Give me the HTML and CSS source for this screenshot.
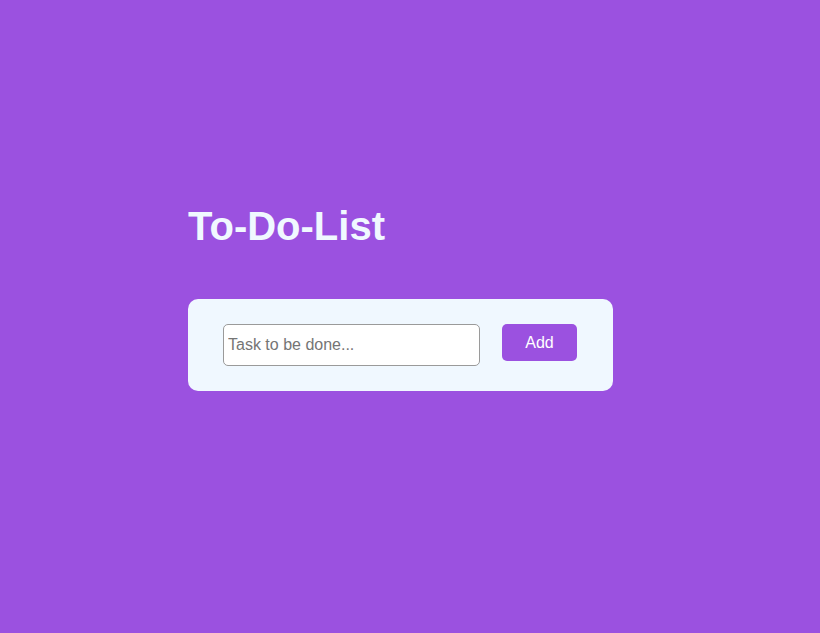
FILE: index.html
```html
<!DOCTYPE html>
<html lang="en">
<head>
<meta charset="utf-8">
<title>To-Do-List</title>
<link rel="stylesheet" href="styles.css">
</head>
<body>
<div class="page">
  <h1 class="title">To-Do-List</h1>
  <div class="card">
    <input class="task-input" type="text" placeholder="Task to be done...">
    <button class="add-btn" type="button">Add</button>
  </div>
</div>
</body>
</html>
```

FILE: styles.css
```css
html, body {
  margin: 0;
  padding: 0;
}
body {
  background: #9b51e0;
  font-family: "Liberation Sans", Arial, sans-serif;
  min-height: 100vh;
}
.page {
  padding: 203px 0 0 188px;
}
.title {
  margin: 0 0 50px 0;
  font-size: 40px;
  font-weight: bold;
  color: #f0f8ff;
  line-height: 46px;
}
.card {
  box-sizing: border-box;
  width: 425px;
  height: 92px;
  background: #f0f8ff;
  border-radius: 10px;
  padding: 25px 36px 25px 35px;
  display: flex;
  align-items: flex-start;
  gap: 22px;
}
.task-input {
  box-sizing: border-box;
  width: 257px;
  height: 42px;
  border: 1px solid #9a9a9a;
  border-radius: 5px;
  background: #fff;
  padding: 0 4px;
  font-family: "Liberation Sans", Arial, sans-serif;
  font-size: 16px;
  color: #333;
  outline: none;
}
.task-input::placeholder {
  color: #757575;
}
.add-btn {
  box-sizing: border-box;
  width: 75px;
  height: 37px;
  border: none;
  border-radius: 5px;
  background: #9b51e0;
  color: #fff;
  font-family: "Liberation Sans", Arial, sans-serif;
  font-size: 16px;
  padding: 0;
  cursor: pointer;
}
```
